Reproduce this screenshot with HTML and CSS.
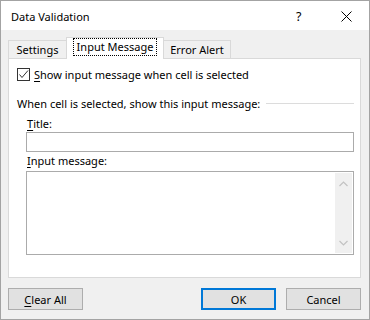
FILE: index.html
```html
<!DOCTYPE html>
<html>
<head>
<meta charset="utf-8">
<link rel="stylesheet" href="styles.css">
</head>
<body>
<div class="window">
  <div class="titlebar">
    <span class="title">Data Validation</span>
    <span class="help">?</span>
    <span class="close">
      <svg width="11" height="11" viewBox="0 0 11 11"><path d="M0.5 0.5 L10.5 10.5 M10.5 0.5 L0.5 10.5" stroke="#000" stroke-width="1" fill="none"/></svg>
    </span>
  </div>
  <div class="body">
    <div class="tabs">
      <div class="tab tab-first">Settings</div>
      <div class="tab tab-active"><span class="focus">Input Message</span></div>
      <div class="tab tab-last">Error Alert</div>
    </div>
    <div class="panel">
      <div class="check-row">
        <span class="checkbox">
          <svg width="11" height="11" viewBox="0 0 11 11"><path d="M1.5 5.5 L4 8.5 L10 1.5" stroke="#333" stroke-width="1" fill="none"/></svg>
        </span>
        <span class="label"><u>S</u>how input message when cell is selected</span>
      </div>
      <div class="group-head">
        <span class="group-label">When cell is selected, show this input message:</span>
        <span class="group-line"></span>
      </div>
      <div class="field-label"><u>T</u>itle:</div>
      <div class="input"></div>
      <div class="field-label field-label2"><u>I</u>nput message:</div>
      <div class="textarea">
        <div class="scrollbar">
          <svg width="9" height="6" viewBox="0 0 9 6"><path d="M0.5 5 L4.5 1 L8.5 5" stroke="#c2c2c2" stroke-width="1.2" fill="none"/></svg>
          <svg width="9" height="6" viewBox="0 0 9 6"><path d="M0.5 1 L4.5 5 L8.5 1" stroke="#c2c2c2" stroke-width="1.2" fill="none"/></svg>
        </div>
      </div>
    </div>
    <div class="buttons">
      <div class="btn"><u>C</u>lear All</div>
      <div class="spacer"></div>
      <div class="btn btn-default">OK</div>
      <div class="btn">Cancel</div>
    </div>
  </div>
</div>
</body>
</html>
```
FILE: styles.css
```css
* { box-sizing: border-box; }
html, body { margin: 0; padding: 0; background: #fff; }
body {
  font-family: "Noto Sans", "Open Sans", sans-serif;
  font-size: 11px;
  color: #000;
}
.window {
  width: 370px;
  height: 320px;
  border: 1px solid #a3a3a3;
  display: flex;
  flex-direction: column;
  background: #fff;
}
.titlebar {
  height: 29px;
  display: flex;
  align-items: center;
  padding-left: 10px;
  padding-top: 1px;
  background: #fff;
}
.title { flex: 1; font-size: 11px; }
.help { width: 12px; margin-right: 33px; font-size: 12.5px; }
.close { width: 11px; height: 11px; margin-right: 17px; display: flex; }
.body {
  flex: 1;
  background: #f0f0f0;
  padding: 7px 8px 0 7px;
  display: flex;
  flex-direction: column;
}
.tabs {
  display: flex;
  align-items: flex-end;
  height: 21px;
}
.tab {
  height: 18px;
  border-top: 1px solid #d9d9d9;
  background: #f0f0f0;
  display: flex;
  align-items: center;
  justify-content: center;
  padding-bottom: 1px;
}
.tab-first { width: 58px; border-left: 1px solid #d9d9d9; }
.tab-last { width: 67px; border-right: 1px solid #d9d9d9; }
.tab-active {
  width: 98px;
  height: 22px;
  margin-bottom: -1px;
  background: #fff;
  border: 1px solid #d9d9d9;
  border-bottom: none;
  position: relative;
  z-index: 1;
  padding-bottom: 3px;
}
.focus {
  outline: 1px dotted #000;
  outline-offset: 0;
  padding: 0 3px;
  line-height: 16px;
}
.panel {
  height: 220px;
  background: #fff;
  border: 1px solid #d9d9d9;
  padding: 9px 6px 0 8px;
  display: flex;
  flex-direction: column;
}
.check-row {
  display: flex;
  align-items: center;
  height: 13px;
}
.checkbox {
  width: 13px;
  height: 13px;
  border: 1px solid #333;
  display: flex;
  align-items: center;
  justify-content: center;
  margin-right: 4px;
}
.group-head {
  margin-top: 14px;
  display: flex;
  align-items: center;
  height: 16px;
}
.group-line {
  flex: 1;
  height: 1px;
  background: #dcdcdc;
  margin-left: 6px;
}
.field-label {
  margin-top: 5px;
  margin-left: 10px;
  height: 16px;
  line-height: 16px;
}
.field-label2 { margin-top: 1px; }
.input {
  margin-left: 9px;
  height: 20px;
  border: 1px solid #ababab;
  background: #fff;
}
.textarea {
  margin-left: 9px;
  margin-top: 2px;
  height: 84px;
  border: 1px solid #ababab;
  background: #fff;
  display: flex;
  justify-content: flex-end;
  padding: 1px;
}
.scrollbar {
  width: 17px;
  background: #f0f0f0;
  display: flex;
  flex-direction: column;
  justify-content: space-between;
  align-items: center;
  padding: 8px 0 7px;
}
.buttons {
  display: flex;
  margin-top: 10px;
  height: 22px;
}
.spacer { flex: 1; }
.btn {
  width: 75px;
  height: 22px;
  background: #e1e1e1;
  border: 1px solid #adadad;
  display: flex;
  align-items: center;
  justify-content: center;
}
.btn-default {
  border: 2px solid #0078d7;
  margin-right: 10px;
}
u { text-decoration: underline; text-underline-offset: 2px; }
```
